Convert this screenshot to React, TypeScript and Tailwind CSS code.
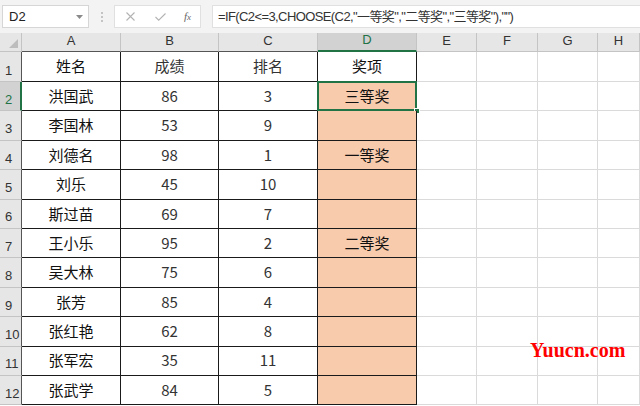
import React from 'react';

const cols = ['A', 'B', 'C', 'D', 'E', 'F', 'G', 'H'];
const data: string[][] = [
  ['姓名', '成绩', '排名', '奖项'],
  ['洪国武', '86', '3', '三等奖'],
  ['李国林', '53', '9', ''],
  ['刘德名', '98', '1', '一等奖'],
  ['刘乐', '45', '10', ''],
  ['斯过苗', '69', '7', ''],
  ['王小乐', '95', '2', '二等奖'],
  ['吴大林', '75', '6', ''],
  ['张芳', '85', '4', ''],
  ['张红艳', '62', '8', ''],
  ['张军宏', '35', '11', ''],
  ['张武学', '84', '5', ''],
];

const cjk = { fontFamily: '"Noto Sans CJK SC", "Noto Sans", sans-serif' };
const ui = { fontFamily: '"Liberation Sans", "Noto Sans CJK SC", Arial, sans-serif' };

export default function App() {
  return (
    <div className="w-[640px] h-[406px] overflow-hidden bg-white relative" style={ui}>
      {/* Toolbar */}
      <div className="h-[33px] bg-[#f3f3f3] flex items-start pt-[5px] pl-[2px]">
        <div className="w-[87px] h-[23px] bg-white border border-[#d6d6d6] flex items-center pl-[6px] pr-[5px]">
          <span className="text-[13px] text-[#222] flex-1">D2</span>
          <svg width="7" height="4" viewBox="0 0 7 4"><path d="M0 0h7L3.5 4z" fill="#8a8a8a" /></svg>
        </div>
        <div className="w-[25px] h-[23px] flex flex-col items-center justify-center gap-[2px]">
          <div className="w-[2px] h-[2px] bg-[#c4c4c4]" />
          <div className="w-[2px] h-[2px] bg-[#c4c4c4]" />
          <div className="w-[2px] h-[2px] bg-[#c4c4c4]" />
        </div>
        <div className="w-[87px] h-[23px] bg-white border border-[#e0e0e0] flex items-center">
          <div className="w-[30px] flex justify-center">
            <svg width="9" height="9" viewBox="0 0 9 9"><path d="M0.5 0.5l8 8M8.5 0.5l-8 8" stroke="#b3b3b3" strokeWidth="1.1" /></svg>
          </div>
          <div className="w-[30px] flex justify-center">
            <svg width="11" height="8" viewBox="0 0 11 8"><path d="M0.5 4l3.2 3.2L10.5 0.5" stroke="#b3b3b3" strokeWidth="1.1" fill="none" /></svg>
          </div>
          <div className="w-[25px] flex justify-center">
            <span className="text-[11px] italic text-[#666]" style={{ fontFamily: '"Liberation Serif", serif' }}>f<span className="text-[9px]">x</span></span>
          </div>
        </div>
        <div className="ml-[11px] flex-1 h-[23px] bg-white border border-[#e0e0e0] border-r-0 flex items-center pl-[5px]">
          <span className="text-[13px] text-[#333] whitespace-nowrap tracking-[-0.6px]">
            =IF(C2&lt;=3,CHOOSE(C2,"一等奖","二等奖","三等奖"),"")
          </span>
        </div>
      </div>

      {/* Grid */}
      <div className="grid grid-cols-[22px_99px_98px_99px_99px_60px_61px_60px_42px] grid-rows-[19px_30px_repeat(11,29.4px)]">
        {/* Header row */}
        <div className="bg-[#e6e6e6] border-r border-b border-[#c4c4c4] relative">
          <svg className="absolute right-[3px] bottom-[3px]" width="9" height="9" viewBox="0 0 9 9"><path d="M9 0V9H0z" fill="#bdbdbd" /></svg>
        </div>
        {cols.map((c, i) => {
          const isD = c === 'D';
          const inTable = i < 4;
          return (
            <div
              key={c}
              className={
                isD
                  ? 'bg-[#d2d2d2] border-r border-r-[#c4c4c4] border-b-2 border-b-[#217346] text-[#217346] flex items-end justify-center pb-[1px] text-[13px]'
                  : inTable
                  ? 'bg-[#e6e6e6] border-r border-r-[#c4c4c4] border-b border-b-[#555] text-[#333] flex items-end justify-center pb-[1px] text-[13px]'
                  : 'bg-[#e6e6e6] border-r border-r-[#c4c4c4] border-b border-b-[#c4c4c4] text-[#333] flex items-end justify-center pb-[1px] text-[13px]'
              }
            >
              {c}
            </div>
          );
        })}

        {data.map((row, r) => {
          const rowNum = r + 1;
          const sel = rowNum === 2;
          return (
            <React.Fragment key={r}>
              <div
                className={
                  sel
                    ? 'bg-[#d2d2d2] border-b border-b-[#c4c4c4] border-r-2 border-r-[#217346] text-[#217346] text-[13px] flex items-end pl-[5px] pb-[1px]'
                    : 'bg-[#e6e6e6] border-b border-b-[#c4c4c4] border-r border-r-[#555] text-[#333] text-[13px] flex items-end pl-[5px] pb-[1px]'
                }
              >
                {rowNum}
              </div>
              {row.map((v, ci) => {
                const isD = ci === 3;
                const isNum = ci === 1 || ci === 2;
                return (
                  <div
                    key={ci}
                    className={
                      (isD && r > 0 ? 'bg-[#f8cbad] ' : 'bg-white ') +
                      'border-r border-b border-[#1a1a1a] flex items-center justify-center text-[15px] relative ' +
                      (isNum ? 'text-[#333]' : 'text-[#111]')
                    }
                    style={cjk}
                  >
                    {v}
                    {isD && r === 1 && (
                      <>
                        <div className="absolute -left-[1px] -top-[1px] -right-[1px] -bottom-[1px] border-2 border-[#217346]" />
                        <div className="absolute -right-[4px] -bottom-[4px] w-[6px] h-[6px] bg-[#217346] border border-white" />
                      </>
                    )}
                  </div>
                );
              })}
              {[0, 1, 2, 3].map((k) => (
                <div key={'e' + k} className="bg-white border-r border-b border-[#dadada]" />
              ))}
            </React.Fragment>
          );
        })}
      </div>

      <div
        className="absolute left-[530px] top-[340px] text-[20px] font-bold text-[#ff0000] leading-none"
        style={{ fontFamily: '"Liberation Serif", "Times New Roman", serif' }}
      >
        Yuucn.com
      </div>
    </div>
  );
}
